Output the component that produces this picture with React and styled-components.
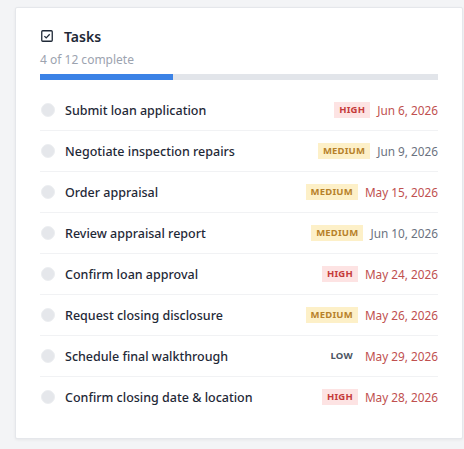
import React from "react";
import styled, { createGlobalStyle } from "styled-components";

const Global = createGlobalStyle`
  html, body { margin: 0; padding: 0; background: #f3f4f6; }
  body { font-family: "Noto Sans", "Liberation Sans", sans-serif; }
`;

const Page = styled.div`
  padding: 7px 1px 10px 15px;
`;

const Card = styled.section`
  width: 448px;
  box-sizing: border-box;
  background: #fff;
  border: 1px solid #e5e7eb;
  border-radius: 2px;
  box-shadow: 0 1px 3px rgba(0, 0, 0, 0.06);
  padding: 18px 24px 21px 24px;
`;

const Header = styled.div`
  display: flex;
  align-items: center;
  gap: 11px;
  height: 20px;
  padding-left: 1px;
`;

const Title = styled.h2`
  margin: 0;
  font-size: 14px;
  font-weight: 600;
  color: #1f2937;
`;

const Sub = styled.div`
  margin-top: 5px;
  font-size: 12px;
  color: #9ca3af;
  line-height: 18px;
`;

const Track = styled.div`
  margin-top: 5px;
  height: 6px;
  background: #e2e5ea;
  overflow: hidden;
`;

const Fill = styled.div`
  height: 100%;
  background: #3b82e6;
`;

const List = styled.ul`
  list-style: none;
  margin: 10px 0 0;
  padding: 0;
`;

const Row = styled.li`
  display: flex;
  align-items: center;
  height: 40px;
  border-bottom: 1px solid #f1f2f4;
  &:last-child { border-bottom: none; }
`;

const Dot = styled.span`
  width: 12px;
  height: 12px;
  border-radius: 50%;
  background: #e5e7eb;
  border: 1px solid #eceef1;
  flex-shrink: 0;
  margin-left: 1px;
`;

const Name = styled.span`
  margin-left: 10px;
  font-size: 12.5px;
  font-weight: 500;
  color: #1f2937;
`;

const Meta = styled.div`
  margin-left: auto;
  display: flex;
  align-items: center;
  gap: 7px;
`;

const badgeColors = {
  HIGH: { bg: "#fde3e3", fg: "#c53a3a" },
  MEDIUM: { bg: "#fdf0c8", fg: "#b7812a" },
  LOW: { bg: "transparent", fg: "#4b5563" },
};

const Badge = styled.span`
  font-size: 9.5px;
  font-weight: 700;
  letter-spacing: 0.2px;
  line-height: 16px;
  padding: 0 5px;
  background: ${(p) => badgeColors[p.$level].bg};
  color: ${(p) => badgeColors[p.$level].fg};
`;

const Due = styled.span`
  font-size: 11.8px;
  color: ${(p) => (p.$late ? "#c0504f" : "#6b7280")};
`;

const tasks = [
  ["Submit loan application", "HIGH", "Jun 6, 2026", true],
  ["Negotiate inspection repairs", "MEDIUM", "Jun 9, 2026", false],
  ["Order appraisal", "MEDIUM", "May 15, 2026", true],
  ["Review appraisal report", "MEDIUM", "Jun 10, 2026", false],
  ["Confirm loan approval", "HIGH", "May 24, 2026", true],
  ["Request closing disclosure", "MEDIUM", "May 26, 2026", true],
  ["Schedule final walkthrough", "LOW", "May 29, 2026", true],
  ["Confirm closing date & location", "HIGH", "May 28, 2026", true],
];

function CheckIcon() {
  return (
    <svg width="12" height="12" viewBox="0 0 12 12" fill="none">
      <rect x="0.75" y="0.75" width="10.5" height="10.5" rx="1" stroke="#1f2937" strokeWidth="1.3" />
      <path d="M3.4 6.1l1.8 1.8 3.5-3.6" stroke="#1f2937" strokeWidth="1.3" />
    </svg>
  );
}

export default function App() {
  const done = 4;
  const total = 12;
  return (
    <Page>
      <Global />
      <Card>
        <Header>
          <CheckIcon />
          <Title>Tasks</Title>
        </Header>
        <Sub>{done} of {total} complete</Sub>
        <Track>
          <Fill style={{ width: `${(done / total) * 100}%` }} />
        </Track>
        <List>
          {tasks.map(([name, level, date, late]) => (
            <Row key={name}>
              <Dot />
              <Name>{name}</Name>
              <Meta>
                <Badge $level={level}>{level}</Badge>
                <Due $late={late}>{date}</Due>
              </Meta>
            </Row>
          ))}
        </List>
      </Card>
    </Page>
  );
}
